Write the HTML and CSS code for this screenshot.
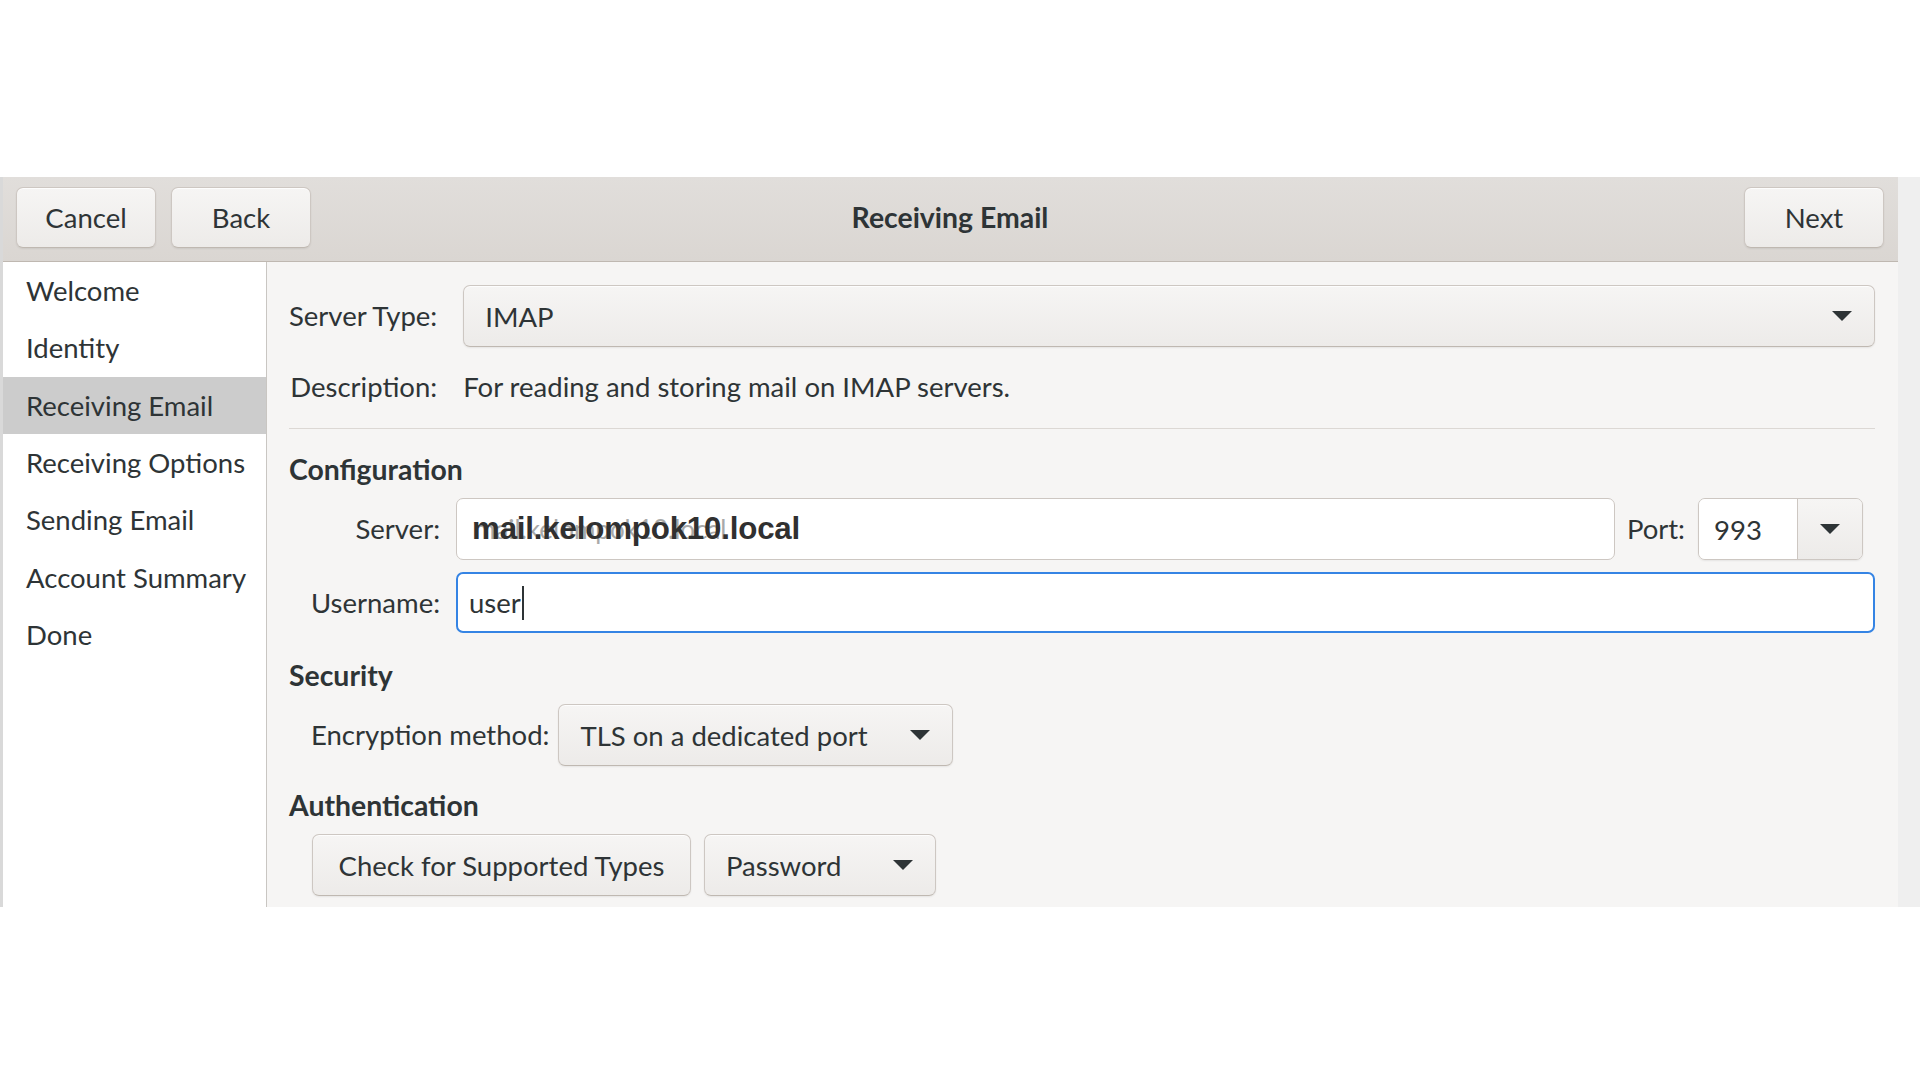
FILE: index.html
```html
<!DOCTYPE html>
<html lang="en">
<head>
<meta charset="utf-8">
<title>Receiving Email</title>
<link rel="stylesheet" href="styles.css">
</head>
<body>
<div class="stage">
  <div class="edge-left"></div>
  <div class="window">
    <header class="headerbar">
      <div class="hb-start">
        <button class="btn hb-btn">Cancel</button>
        <button class="btn hb-btn">Back</button>
      </div>
      <div class="hb-title">Receiving Email</div>
      <div class="hb-end">
        <button class="btn hb-btn">Next</button>
      </div>
    </header>
    <div class="body">
      <nav class="sidebar">
        <div class="side-item">Welcome</div>
        <div class="side-item">Identity</div>
        <div class="side-item selected">Receiving Email</div>
        <div class="side-item">Receiving Options</div>
        <div class="side-item">Sending Email</div>
        <div class="side-item">Account Summary</div>
        <div class="side-item">Done</div>
      </nav>
      <main class="content">
        <div class="top-grid">
          <div class="label">Server Type:</div>
          <div class="combo combo-wide">
            <span class="combo-text">IMAP</span>
            <svg class="arrow" viewBox="0 0 20 10" width="20" height="10"><polygon points="0,0 20,0 10,10"/></svg>
          </div>
          <div class="label">Description:</div>
          <div class="desc">For reading and storing mail on IMAP servers.</div>
        </div>
        <div class="separator"></div>
        <h3 class="heading heading-config">Configuration</h3>
        <div class="form-grid">
          <div class="label">Server:</div>
          <div class="server-row">
            <div class="entry server-entry">
              <span class="ghost">mail.kelompok10.local</span>
              <span class="server-text">mail.kelompok10.local</span>
            </div>
            <div class="label port-label">Port:</div>
            <div class="spin">
              <div class="spin-value">993</div>
              <div class="spin-btn">
                <svg class="arrow" viewBox="0 0 20 10" width="20" height="10"><polygon points="0,0 20,0 10,10"/></svg>
              </div>
            </div>
          </div>
          <div class="label">Username:</div>
          <div class="entry focused"><span class="entry-text">user</span><span class="caret"></span></div>
        </div>
        <h3 class="heading heading-security">Security</h3>
        <div class="inline-row enc-row">
          <div class="label">Encryption method:</div>
          <div class="combo combo-enc">
            <span class="combo-text">TLS on a dedicated port</span>
            <svg class="arrow" viewBox="0 0 20 10" width="20" height="10"><polygon points="0,0 20,0 10,10"/></svg>
          </div>
        </div>
        <h3 class="heading heading-auth">Authentication</h3>
        <div class="inline-row auth-row">
          <button class="btn check-btn">Check for Supported Types</button>
          <div class="combo combo-pass">
            <span class="combo-text">Password</span>
            <svg class="arrow" viewBox="0 0 20 10" width="20" height="10"><polygon points="0,0 20,0 10,10"/></svg>
          </div>
        </div>
      </main>
    </div>
  </div>
  <div class="edge-right"></div>
</div>
</body>
</html>
```
FILE: styles.css
```css
html, body {
  margin: 0;
  padding: 0;
  background: #ffffff;
}

body {
  width: 1920px;
  height: 1080px;
  overflow: hidden;
  font-family: Lato, "Noto Sans", sans-serif;
  font-size: 27.5px;
  color: #2e3436;
}

.stage {
  margin-top: 177px;
  height: 730px;
  display: flex;
}

.edge-left {
  width: 3px;
  background: #d9d9d9;
}

.edge-right {
  flex: 1;
  background: #efefef;
}

.window {
  flex: 0 0 1895px;
  display: flex;
  flex-direction: column;
  overflow: hidden;
  background: #f6f5f4;
}

/* Header bar */
.headerbar {
  flex: 0 0 auto;
  box-sizing: border-box;
  height: 85px;
  border-bottom: 1px solid #bfb8b1;
  background: linear-gradient(to bottom, #e1dedb, #dad6d2);
  display: grid;
  grid-template-columns: 1fr auto 1fr;
  align-items: center;
  padding: 0 14px 4px 13px;
}

.hb-start {
  display: flex;
  gap: 15px;
}

.hb-end {
  display: flex;
  justify-content: flex-end;
}

.hb-title {
  font-weight: 700;
  font-size: 28.4px;
  line-height: 34px;
  color: #2e3436;
}

.btn {
  font-family: Lato, "Noto Sans", sans-serif;
  font-size: 27.5px;
  color: #2e3436;
  height: 61px;
  border: 1px solid #cdc7c2;
  border-bottom-color: #bfb8b1;
  border-radius: 7px;
  background: linear-gradient(to bottom, #f6f5f4, #edebe9);
  box-shadow: inset 0 1px rgba(255, 255, 255, 0.8), 0 1px 2px rgba(0, 0, 0, 0.07);
  padding: 0 28px;
  cursor: default;
}

.hb-btn {
  width: 140px;
}

/* Body */
.body {
  flex: 1;
  display: flex;
  min-height: 0;
}

.sidebar {
  flex: 0 0 264px;
  box-sizing: border-box;
  background: #ffffff;
  border-right: 1px solid #c9c6c2;
}

.side-item {
  height: 57.33px;
  line-height: 57.33px;
  padding-left: 23px;
  white-space: nowrap;
}

.side-item.selected {
  background: #cccccc;
}

.content {
  flex: 1;
  padding: 23px 23px 0 22px;
  min-width: 0;
}

.label {
  line-height: 34px;
  white-space: nowrap;
}

.top-grid {
  display: grid;
  grid-template-columns: auto 1fr;
  column-gap: 26px;
  row-gap: 23px;
  align-items: center;
}

.top-grid .label,
.form-grid > .label {
  justify-self: end;
}

.desc {
  line-height: 34px;
}

.combo {
  box-sizing: border-box;
  height: 62px;
  border: 1px solid #cdc7c2;
  border-bottom-color: #bfb8b1;
  border-radius: 7px;
  background: linear-gradient(to bottom, #f6f5f4, #edebe9);
  box-shadow: inset 0 1px rgba(255, 255, 255, 0.8), 0 1px 2px rgba(0, 0, 0, 0.07);
  display: flex;
  align-items: center;
  justify-content: space-between;
  padding: 0 22px 0 21px;
}

.combo-enc {
  width: 395px;
}

.combo-pass {
  width: 232px;
}

.arrow {
  fill: #2e3436;
  flex: 0 0 auto;
}

.separator {
  margin-top: 24px;
  height: 1px;
  background: #dcd8d4;
}

.heading {
  margin: 0 0 12px 0;
  font-size: 28.4px;
  font-weight: 700;
  line-height: 34px;
}

.heading-config {
  margin-top: 23px;
}

.heading-security {
  margin-top: 25px;
}

.heading-auth {
  margin-top: 22px;
}

.form-grid {
  display: grid;
  grid-template-columns: auto 1fr;
  column-gap: 16px;
  row-gap: 12px;
  align-items: center;
  padding-left: 22px;
}

.server-row {
  display: flex;
  align-items: center;
  gap: 12px;
  margin-right: 12px;
}

.entry {
  box-sizing: border-box;
  height: 62px;
  background: #ffffff;
  border: 1px solid #cdc7c2;
  border-radius: 7px;
  display: flex;
  align-items: center;
  padding-left: 15px;
  position: relative;
}

.server-entry {
  flex: 1;
}

.ghost {
  position: absolute;
  left: 17px;
  top: 13px;
  color: #a9a9a9;
  font-size: 26px;
  line-height: 34px;
}

.server-text {
  position: relative;
  font-family: "Liberation Sans", Arial, sans-serif;
  font-weight: 700;
  font-size: 31.3px;
  color: #303030;
  letter-spacing: -0.2px;
}

.entry.focused {
  height: 61px;
  border: 2px solid #3584e4;
  padding-left: 11px;
}

.entry-text {
  line-height: 34px;
}

.caret {
  display: inline-block;
  width: 2px;
  height: 34px;
  background: #2e3436;
  margin-left: 1px;
}

.spin {
  box-sizing: border-box;
  width: 165px;
  height: 62px;
  border: 1px solid #cdc7c2;
  border-radius: 7px;
  display: flex;
  overflow: hidden;
  margin-left: 1px;
  box-shadow: 0 1px 2px rgba(0, 0, 0, 0.07);
}

.spin-value {
  flex: 1;
  background: #ffffff;
  display: flex;
  align-items: center;
  padding-left: 15px;
}

.spin-btn {
  flex: 0 0 64px;
  border-left: 1px solid #cdc7c2;
  background: linear-gradient(to bottom, #f6f5f4, #edebe9);
  display: flex;
  align-items: center;
  justify-content: center;
}

.inline-row {
  display: flex;
  align-items: center;
  gap: 12px;
  padding-left: 22px;
}

.enc-row {
  gap: 9px;
}

.auth-row {
  gap: 13px;
  padding-left: 23px;
}

.check-btn {
  width: 379px;
  height: 62px;
  padding: 0;
}
```
